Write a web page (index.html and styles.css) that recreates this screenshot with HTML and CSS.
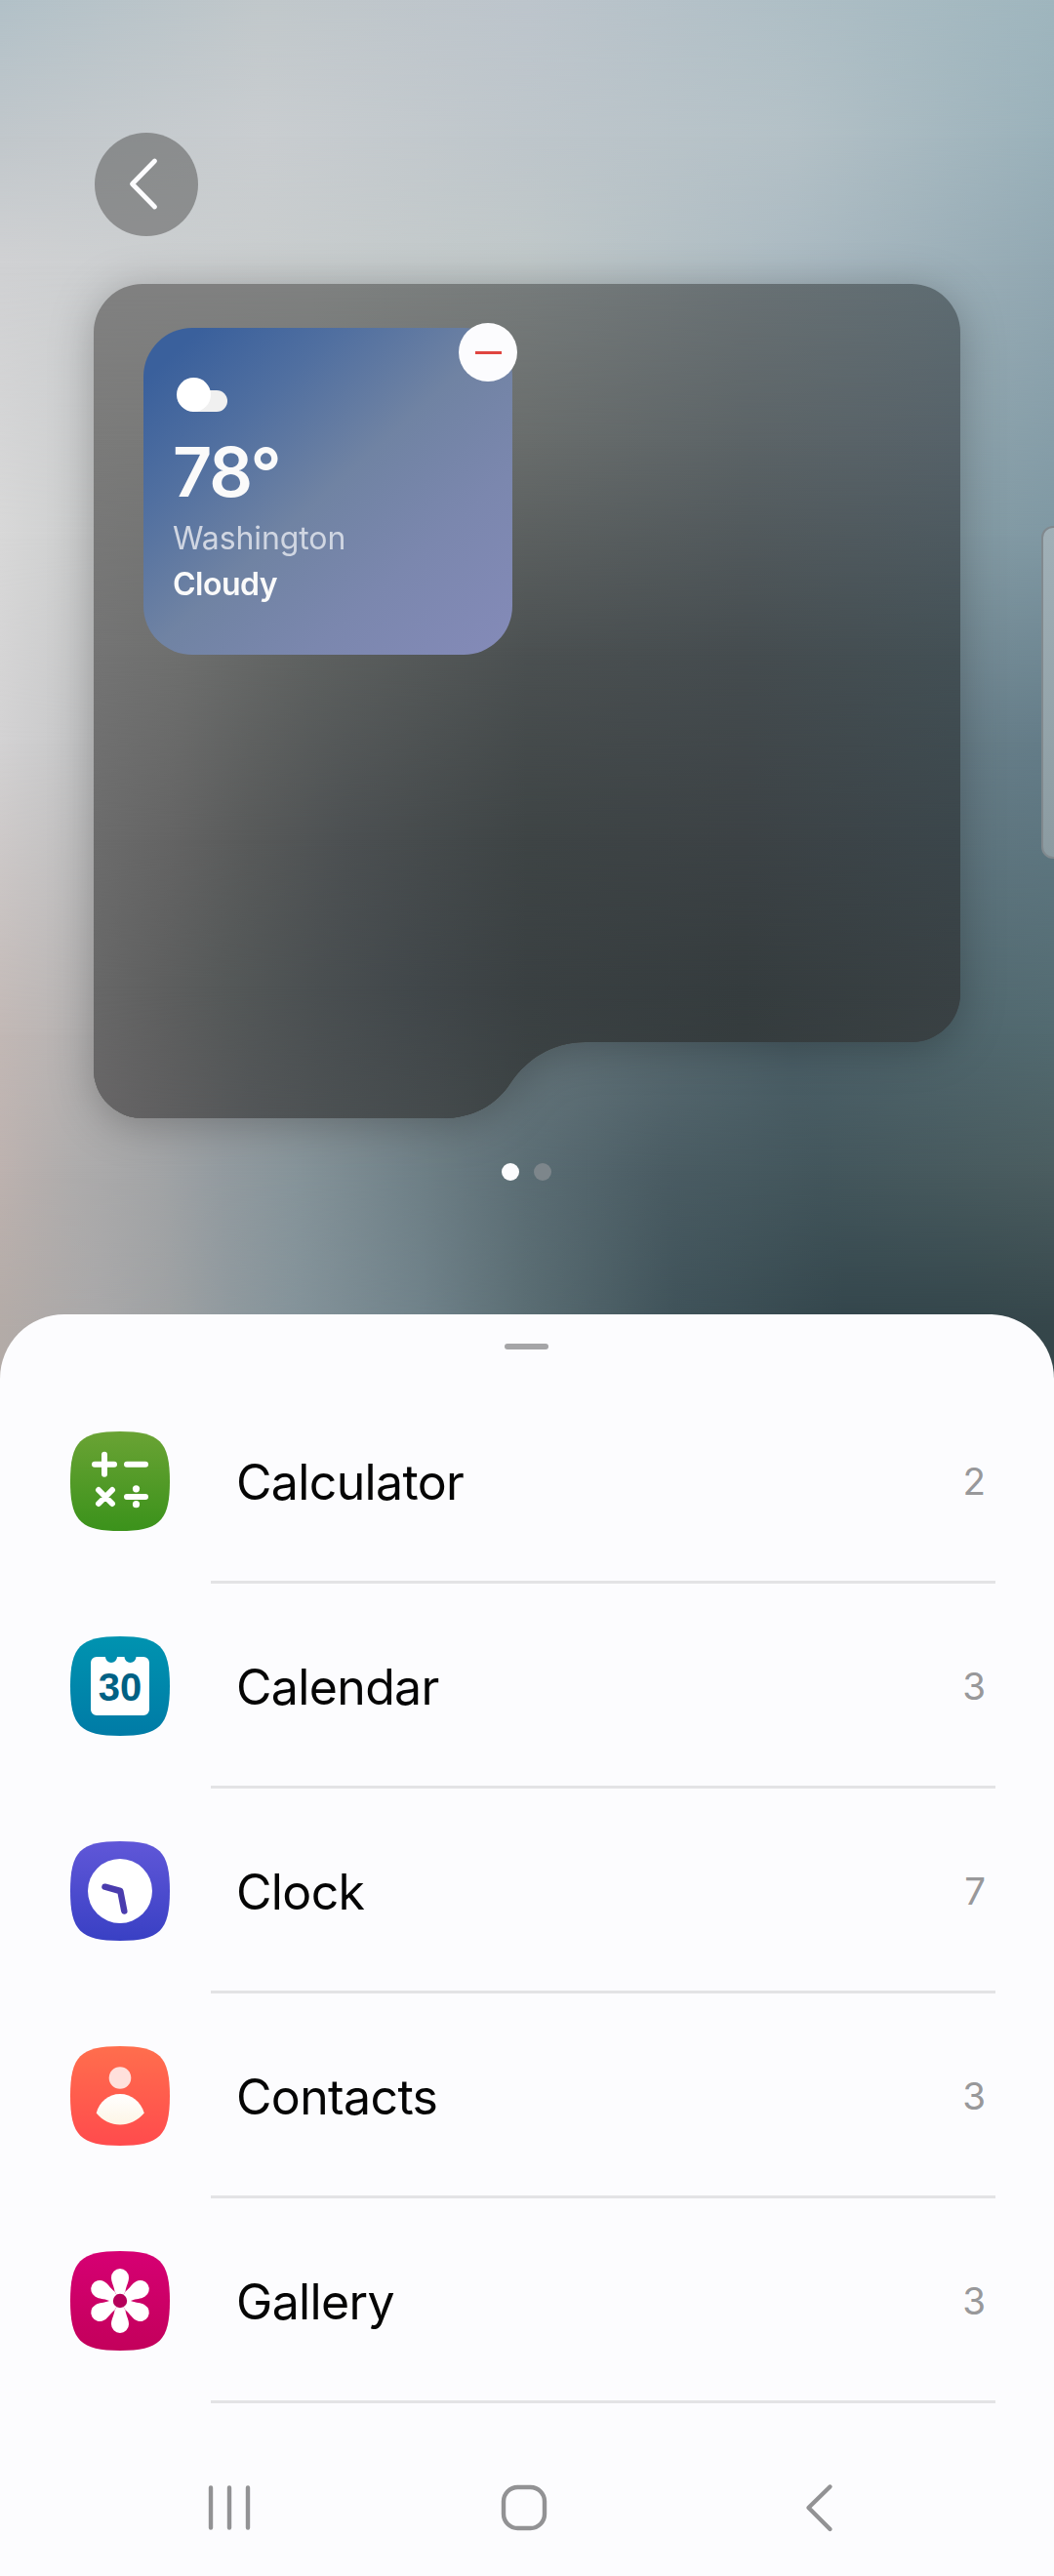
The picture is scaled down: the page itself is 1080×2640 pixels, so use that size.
FILE: index.html
```html
<!DOCTYPE html>
<html lang="en">
<head>
<meta charset="utf-8">
<title>Cover screen widgets</title>
<link rel="stylesheet" href="styles.css">
</head>
<body>
<div class="screen">
  <div class="wallpaper"><i class="w1"></i><i class="w2"></i><i class="w3"></i><i class="w4"></i><i class="w5"></i><i class="w6"></i><i class="w7"></i><i class="w8"></i></div>
  <main class="stage">
    <button class="back" aria-label="Back">
      <svg width="106" height="106" viewBox="0 0 106 106"><path d="M61.5 29 38.500 52.500 61.500 76" fill="none" stroke="#fcfcfe" stroke-width="4.800" stroke-linecap="round" stroke-linejoin="round"/></svg>
    </button>
    <section class="panel">
      <div class="panel-fill"><i class="p1"></i><i class="p2"></i><i class="p3"></i><i class="p4"></i><i class="p5"></i><i class="p6"></i></div>
      <article class="weather">
        <svg class="cloud" width="54" height="37" viewBox="0 0 54 37"><path d="M17 14H42a11 11 0 0 1 0 22H17Z" fill="#f0f0f0"/><circle cx="18.500" cy="18.500" r="17.500" fill="#fff"/></svg>
        <div class="temp">78°</div>
        <div class="city">Washington</div>
        <div class="cond">Cloudy</div>
        <button class="remove" aria-label="Remove"></button>
      </article>
    </section>
    <div class="dots"><span class="dot on"></span><span class="dot"></span></div>
    <div class="edge"></div>
  </main>
  <section class="sheet">
    <div class="grip"></div>
    <ul class="list">
      <li class="row">
        <svg class="icon" viewBox="0 0 102 102"><defs><linearGradient id="g1" x2="0" y2="1"><stop stop-color="#6aa334"/><stop offset="1" stop-color="#3b921b"/></linearGradient></defs>
          <path d="M51 0C91.500 0 102 10.500 102 51S91.500 102 51 102 0 91.500 0 51 10.500 0 51 0Z" fill="url(#g1)"/>
          <path d="M25 33.700H45M35 23.800V43.800M58 33.700H77M58 67H77M29 60 43 74M43 60 29 74" stroke="#fff" stroke-width="6" stroke-linecap="round"/><circle cx="67.500" cy="58.800" r="3.600" fill="#fff"/><circle cx="67.500" cy="74.700" r="3.600" fill="#fff"/></svg>
        <div class="line"><span class="name">Calculator</span><span class="count">2</span></div>
      </li>
      <li class="row">
        <svg class="icon" viewBox="0 0 102 102"><defs><linearGradient id="g2" x2="0" y2="1"><stop stop-color="#0093b0"/><stop offset="1" stop-color="#007ba6"/></linearGradient></defs>
          <path d="M51 0C91.500 0 102 10.500 102 51S91.500 102 51 102 0 91.500 0 51 10.500 0 51 0Z" fill="url(#g2)"/>
          <path d="M27 21H36a6 6 0 0 0 12 0H55.500a6 6 0 0 0 12 0H75a6 6 0 0 1 6 6V75a6 6 0 0 1-6 6H27a6 6 0 0 1-6-6V27a6 6 0 0 1 6-6Z" fill="#fff"/><text class="day" x="51" y="65.500" text-anchor="middle">30</text></svg>
        <div class="line"><span class="name">Calendar</span><span class="count">3</span></div>
      </li>
      <li class="row">
        <svg class="icon" viewBox="0 0 102 102"><defs><linearGradient id="g3" x2="0" y2="1"><stop stop-color="#6057d8"/><stop offset="1" stop-color="#3940c4"/></linearGradient></defs>
          <path d="M51 0C91.500 0 102 10.500 102 51S91.500 102 51 102 0 91.500 0 51 10.500 0 51 0Z" fill="url(#g3)"/>
          <circle cx="51" cy="51" r="33" fill="#fff"/><path d="M35.500 46.700 51.300 51 55.300 71.500" fill="none" stroke="#4a3cae" stroke-width="6.500" stroke-linecap="round" stroke-linejoin="round"/></svg>
        <div class="line"><span class="name">Clock</span><span class="count">7</span></div>
      </li>
      <li class="row">
        <svg class="icon" viewBox="0 0 102 102"><defs><linearGradient id="g4" x2="0" y2="1"><stop stop-color="#ff6e4d"/><stop offset="1" stop-color="#ff4b4d"/></linearGradient><linearGradient id="g4b" x2="0" y2="1"><stop stop-color="#fff"/><stop offset="1" stop-color="#fdf5e6"/></linearGradient></defs>
          <path d="M51 0C91.500 0 102 10.500 102 51S91.500 102 51 102 0 91.500 0 51 10.500 0 51 0Z" fill="url(#g4)"/>
          <circle cx="51" cy="32.500" r="11.300" fill="#ffe0dc"/><path d="M26.700 68.500C30 57 39 49 51 49S72 57 75.800 68.500C69 76.500 60 80.500 51 80.500S33 76.500 26.700 68.500Z" fill="url(#g4b)"/></svg>
        <div class="line"><span class="name">Contacts</span><span class="count">3</span></div>
      </li>
      <li class="row">
        <svg class="icon" viewBox="0 0 102 102"><defs><linearGradient id="g5" x2="0" y2="1"><stop stop-color="#d60073"/><stop offset="1" stop-color="#c3005b"/></linearGradient><path id="petal" d="M51 51 45.600 41.500C44.500 35 42 32 42 27A9 9 0 0 1 60 27C60 32 57.500 35 56.400 41.500Z"/></defs>
          <path d="M51 0C91.500 0 102 10.500 102 51S91.500 102 51 102 0 91.500 0 51 10.500 0 51 0Z" fill="url(#g5)"/>
          <g fill="#fff"><use href="#petal"/><use href="#petal" transform="rotate(60 51 51)"/><use href="#petal" transform="rotate(120 51 51)"/><use href="#petal" transform="rotate(180 51 51)"/><use href="#petal" transform="rotate(240 51 51)"/><use href="#petal" transform="rotate(300 51 51)"/></g><circle cx="51" cy="51" r="7.200" fill="#b5005a"/></svg>
        <div class="line"><span class="name">Gallery</span><span class="count">3</span></div>
      </li>
    </ul>
    <nav class="nav">
      <svg width="48" height="52" viewBox="0 0 48 52"><path d="M5 5.500V46.500M24 5.500V46.500M43 5.500V46.500"/></svg>
      <svg class="home" width="52" height="52" viewBox="0 0 52 52"><rect x="5" y="5" width="42" height="42" rx="14.500"/></svg>
      <svg width="34" height="52" viewBox="0 0 34 52"><path d="M28.500 4.500 6.500 26 28.500 48"/></svg>
    </nav>
  </section>
</div>
</body>
</html>
```
FILE: styles.css
```css
* { box-sizing: border-box; }
body { margin: 0; font-family: Inter, "Open Sans", sans-serif; }
button { border: 0; padding: 0; display: block; }
.screen { position: relative; width: 1080px; height: 2640px; overflow: hidden; display: flex; flex-direction: column; }

/* Wallpaper: each band fades in over the one above it */
.wallpaper { position: absolute; inset: 0 0 auto 0; height: 1440px; }
.wallpaper i, .panel-fill i { position: absolute; inset: 0; }
.w1 { background: linear-gradient(90deg, #b2c1c8, #c1c8cb 25%, #bdc5cc 50%, #afbfc6 75%, #9fb6be); }
.w2 { background: linear-gradient(90deg, #c1c7cb, #c9cdd0 25%, #bec6cb 50%, #b4c1c7 75%, #9ab1ba); mask-image: linear-gradient(transparent 0, #000 140px); }
.w3 { background: linear-gradient(90deg, #d0d1d3, #c9cdce 25%, #c0c8c9 50%, #abbac2 75%, #92a8b2); mask-image: linear-gradient(transparent 140px, #000 270px); }
.w4 { background: linear-gradient(90deg, #d8d8d8, #b5b9ba 25%, #9aa3a5 50%, #8fa1a7 75%, #7f98a3); mask-image: linear-gradient(transparent 270px, #000 550px); }
.w5 { background: linear-gradient(90deg, #d3d2d3, #a8acad 25%, #808a8d 50%, #72828a 75%, #637c88); mask-image: linear-gradient(transparent 550px, #000 760px); }
.w6 { background: linear-gradient(90deg, #c2b8b5, #b5b3b3 8%, #999c9f 25%, #66767c 50%, #4c6068 75%, #526a70); mask-image: linear-gradient(transparent 760px, #000 1060px); }
.w7 { background: linear-gradient(90deg, #bdb2af, #aeacac 7%, #a2a4a6 15%, #959c a1 21%, #586a71 51%); background: linear-gradient(90deg, #bdb2af, #aeacac 7%, #a2a4a6 15%, #939ba0 21%, #86949a 28%, #72838a 38%, #5b6d74 50%, #4a5c63 63%, #43565c 78%, #4b5d60); mask-image: linear-gradient(transparent 1060px, #000 1200px); }
.w8 { background: linear-gradient(90deg, #b3aba7, #a9a8a9 9%, #9ea1a3 16%, #8f999e 22%, #84939a 28%, #70828a 40%, #5a6d73 50%, #3f5259 64%, #33454b 80%, #33454a 92%, #35464a); mask-image: linear-gradient(transparent 1200px, #000 1360px); }

.stage { position: relative; height: 1347px; padding: 136px 96px 0; display: flex; flex-direction: column; align-items: stretch; }
.back { width: 106px; height: 106px; margin-left: 1px; border-radius: 50%; background: rgba(84, 84, 84, .52); }
.panel { position: relative; margin-top: 49px; height: 855px; padding: 45px 51px; filter: drop-shadow(0 6px 22px rgba(0, 0, 0, .25)); }
.panel-fill { position: absolute; inset: 0; clip-path: path("M50 0H838A50 50 0 0 1 888 50V727A50 50 0 0 1 838 777H504C470 777 444 794 427 819C412 842 388 855 357 855H50A50 50 0 0 1 0 805V50A50 50 0 0 1 50 0Z"); }
.p1 { background: linear-gradient(90deg, #818181, #7f8180 25%, #767b7b 50%, #697174 75%, #5e6c72); }
.p2 { background: linear-gradient(90deg, #7b7b7a, #737574 25%, #696d6c 50%, #5c6467 75%, #566269); mask-image: linear-gradient(transparent 0, #000 160px); }
.p3 { background: linear-gradient(90deg, #747474, #6e6f6e 10%, #5e6160 25%, #4b5051 50%, #454c4f 75%, #435055); mask-image: linear-gradient(transparent 160px, #000 380px); }
.p4 { background: linear-gradient(90deg, #6c6c6c, #646464 9%, #585a5a 18%, #4c5052 29%, #3e4445 50%, #3c4245 75%, #3b464b); mask-image: linear-gradient(transparent 380px, #000 570px); }
.p5 { background: linear-gradient(90deg, #686868, #5e5f5f 8%, #545858 16%, #4a4f51 26%, #42484b 36%, #3a4042 50%, #353c3e 75%, #394144); mask-image: linear-gradient(transparent 570px, #000 720px); }
.p6 { background: linear-gradient(90deg, #686667, #5e5e5f 9%, #535658 18%, #4b5052 28%, #444a4c 40%, #3c4344 50%, #363d3e 75%, #3b4244); mask-image: linear-gradient(transparent 720px, #000 855px); }

.weather { position: relative; width: 378px; height: 335px; padding: 50px 31px 0 33px; border-radius: 50px; background: linear-gradient(138deg, #3a609c 8%, #506fa0 27%, #7083a3 50%, #7b87ae 72%, #838ab7 96%); color: #fafafa; }
.cloud { display: block; }
.temp { margin: 22px 0 0 -3px; height: 78px; font-size: 70px; line-height: 78px; font-weight: 600; letter-spacing: -2px; }
.city { margin: 5px 0 0 -3px; height: 47px; font-size: 32px; line-height: 47px; color: #d0d6e2; letter-spacing: -.1px; }
.cond { margin-left: -3px; height: 47px; font-size: 32px; line-height: 47px; font-weight: 600; letter-spacing: -.5px; }
.remove { position: absolute; right: -5px; top: -5px; width: 60px; height: 60px; border-radius: 50%; background: linear-gradient(#e04540, #e04540) center / 27px 3px no-repeat #fcfcfe; }
.dots { display: flex; gap: 15px; margin: 46px 0 0 418px; }
.dot { width: 18px; height: 18px; border-radius: 50%; background: #7d868b; }
.dot.on { background: #fcfcfe; }
.edge { position: absolute; right: -14px; top: 539px; width: 27px; height: 341px; border: 2px solid #81898e; border-radius: 12px; background: linear-gradient(#a0b0b7, #8b9ba1); }

.sheet { position: relative; flex: 1; border-radius: 66px 66px 0 0; background: #fcfcfe; display: flex; flex-direction: column; }
.grip { width: 45px; height: 6px; margin: 30px 0 0 517px; border-radius: 3px; background: #a5a5a7; }
.list { list-style: none; margin: 30px 0 0; padding: 0; }
.row { display: flex; align-items: center; height: 210px; padding: 0 60px 0 72px; }
.icon { width: 102px; height: 102px; flex: none; }
.day { font: 700 40px "Liberation Sans", Arial, sans-serif; fill: #006184; }
.line { flex: 1; margin-left: 42px; height: 210px; padding: 0 10px 0 26px; display: flex; align-items: center; justify-content: space-between; border-bottom: 3px solid #e3e3e5; }
.name { font-size: 50px; line-height: 60px; padding-top: 5px; color: #050505; letter-spacing: -.65px; }
.count { font-size: 38.500px; line-height: 46px; color: #98989a; padding-top: 3px; }
.nav { display: flex; padding: 81px 0 0 211px; }
.nav svg { fill: none; stroke: #929294; stroke-width: 4.400px; stroke-linecap: round; stroke-linejoin: round; }
.home { margin: 0 259px 0 252px; }
```
